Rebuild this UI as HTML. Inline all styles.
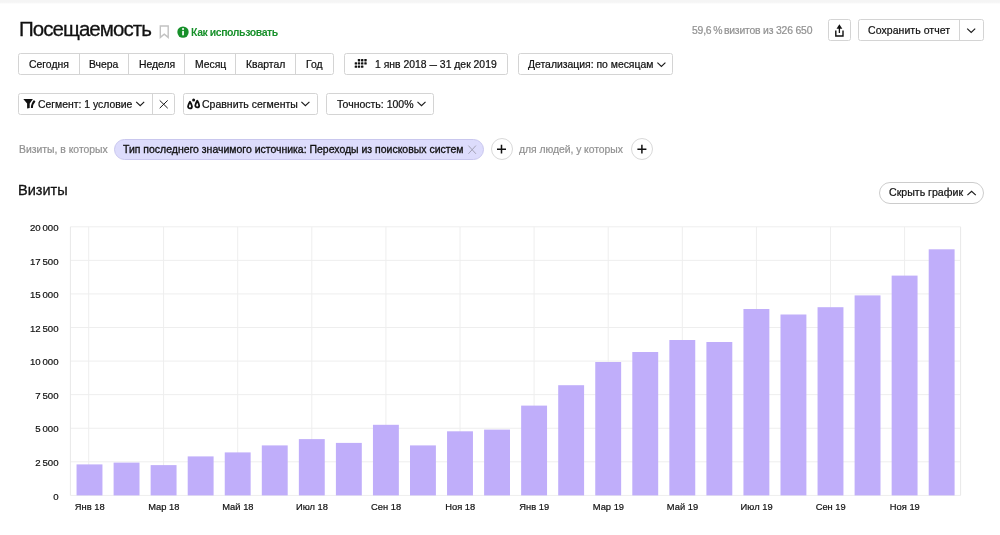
<!DOCTYPE html>
<html lang="ru"><head><meta charset="utf-8"><title>Посещаемость</title>
<style>
*{box-sizing:border-box;margin:0;padding:0}
html,body{width:1000px;height:535px;overflow:hidden;background:#fff}
body{font-family:"Liberation Sans",Arial,sans-serif;color:#111;position:relative;font-size:10.4px}
.abs{position:absolute;white-space:nowrap}
.topbar{left:0;top:0;width:1000px;height:4px;background:linear-gradient(#f5f5f5 0,#f5f5f5 55%,#fff 100%)}
.title{will-change:transform;-webkit-text-stroke:0.3px #111;left:18.6px;top:16.1px;font-size:20.5px;line-height:26px;color:#111;letter-spacing:-0.95px}
.box{border:1px solid #d4d4d4;border-radius:2.5px;background:#fff;height:22px}
.sep{width:1px;height:20px;background:#d4d4d4}
.t{font-size:10.4px;line-height:12px;color:#111;-webkit-text-stroke:0.22px currentColor;will-change:transform}
.gray{color:#929292}
.how{will-change:transform;top:25.8px;font-size:10.5px;font-weight:bold;color:#1a9428;line-height:12px;letter-spacing:-0.4px;word-spacing:-0.3px;color:#17902a}
.pill{left:113.5px;top:139px;height:21px;width:370.5px;border-radius:10.5px;background:#dddcfc;border:1px solid #c9c7ee}
.circ{width:22px;height:22px;border:1px solid #d8d8d8;border-radius:50%;background:#fff}
.h2{will-change:transform;-webkit-text-stroke:0.3px #111;left:18.4px;top:181.2px;font-size:14.5px;line-height:18px;color:#111}
.hide{left:879px;top:182px;width:105px;height:22px;border:1px solid #ccc;border-radius:11px;background:#fff}
svg{overflow:visible}
</style></head><body>
<div class="abs topbar"></div>
<div class="abs title">Посещаемость</div>
<svg class="abs" style="left:0;top:0" width="1000" height="215" viewBox="0 0 1000 215">
 <!-- bookmark -->
 <path d="M160.3 26h7.9v11.4l-3.95-3.3-3.95 3.3z" fill="none" stroke="#c2c2c2" stroke-width="1.4"/>
 <!-- info -->
 <circle cx="183" cy="32.1" r="5.7" fill="#17902a"/><rect x="182.2" y="30.9" width="1.7" height="4.4" fill="#fff"/><circle cx="183.05" cy="29" r="1.05" fill="#fff"/>
</svg>
<div class="abs how" style="left:190.7px">Как использовать</div>

<!-- row 1 -->
<div class="abs box" style="left:18px;top:53px;width:315.5px"></div>
<div class="abs sep" style="left:79px;top:54px"></div>
<div class="abs sep" style="left:128px;top:54px"></div>
<div class="abs sep" style="left:184px;top:54px"></div>
<div class="abs sep" style="left:235px;top:54px"></div>
<div class="abs sep" style="left:295px;top:54px"></div>
<div class="abs t" style="left:28.6px;top:59.4px">Сегодня</div>
<div class="abs t" style="left:89.3px;top:59.4px">Вчера</div>
<div class="abs t" style="left:138.5px;top:59.4px">Неделя</div>
<div class="abs t" style="left:194.6px;top:59.4px">Месяц</div>
<div class="abs t" style="left:246px;top:59.4px">Квартал</div>
<div class="abs t" style="left:305.8px;top:59.4px">Год</div>
<div class="abs box" style="left:344px;top:53px;width:164px"></div>
<div class="abs t" style="left:375.4px;top:59.4px">1 янв 2018 <span style="display:inline-block;transform:scaleX(.72);margin:0 -1.45px">—</span> 31 дек 2019</div>
<div class="abs box" style="left:518px;top:53px;width:155px"></div>
<div class="abs t" style="left:528px;top:59.4px">Детализация: по месяцам</div>

<div class="abs t gray" style="left:691.5px;top:25.2px;letter-spacing:-0.19px"><span style="word-spacing:-1px">59,6 % </span>визитов из 326 650</div>
<div class="abs box" style="left:828px;top:19px;width:23px"></div>
<div class="abs box" style="left:858px;top:19px;width:126px"></div>
<div class="abs sep" style="left:959px;top:20px"></div>
<div class="abs t" style="left:867.6px;top:23.8px;font-size:10.5px;letter-spacing:0.06px">Сохранить отчет</div>

<!-- row 2 -->
<div class="abs box" style="left:18px;top:93px;width:157px"></div>
<div class="abs sep" style="left:152px;top:94px"></div>
<div class="abs t" style="left:38.3px;top:99.4px">Сегмент: 1 условие</div>
<div class="abs box" style="left:183px;top:93px;width:135px"></div>
<div class="abs t" style="left:202.4px;top:98.3px;font-size:10.5px">Сравнить сегменты</div>
<div class="abs box" style="left:326px;top:93px;width:108px"></div>
<div class="abs t" style="left:336.5px;top:98.3px;font-size:10.5px">Точность: 100%</div>

<!-- filter row -->
<div class="abs t gray" style="left:18.5px;top:144px">Визиты, в которых</div>
<div class="abs pill"></div>
<div class="abs t" style="left:122.8px;top:144px;font-size:10.48px;-webkit-text-stroke:0.32px #111">Тип последнего значимого источника: Переходы из поисковых систем</div>
<div class="abs circ" style="left:490.7px;top:138.2px"></div>
<div class="abs t gray" style="left:519.1px;top:144px;letter-spacing:-0.05px">для людей, у которых</div>
<div class="abs circ" style="left:631px;top:138.2px"></div>

<div class="abs h2">Визиты</div>
<div class="abs hide"></div>
<div class="abs t" style="left:889.1px;top:186.3px;font-size:10.6px">Скрыть график</div>

<!-- icons overlay -->
<svg class="abs" style="left:0;top:0" width="1000" height="215" viewBox="0 0 1000 215" fill="none" stroke="#1a1a1a" stroke-width="1.15">
 <!-- calendar dots -->
 <g fill="#111" stroke="none">
  <rect x="357.8" y="59" width="2.4" height="2.4" rx=".6"/><rect x="361" y="59" width="2.4" height="2.4" rx=".6"/><rect x="364.3" y="59" width="2.4" height="2.4" rx=".6"/>
  <rect x="354.7" y="62.2" width="2.4" height="2.4" rx=".6"/><rect x="357.8" y="62.2" width="2.4" height="2.4" rx=".6"/><rect x="361" y="62.2" width="2.4" height="2.4" rx=".6"/><rect x="364.3" y="62.2" width="2.4" height="2.4" rx=".6"/>
  <rect x="354.7" y="65.4" width="2.4" height="2.4" rx=".6"/><rect x="357.8" y="65.4" width="2.4" height="2.4" rx=".6"/><rect x="361" y="65.4" width="2.4" height="2.4" rx=".6"/>
 </g>
 <!-- chevrons down -->
 <path d="M657.4 62.6l4 3.8 4-3.8"/>
 <path d="M967.2 28.6l4 3.8 4-3.8"/>
 <path d="M136.2 101.9l4 3.8 4-3.8"/>
 <path d="M301.4 101.9l4 3.8 4-3.8"/>
 <path d="M417.5 101.9l4 3.8 4-3.8"/>
 <!-- chevron up -->
 <path d="M967.4 195.2l4.2-3.9 4.2 3.9"/>
 <!-- X button -->
 <path d="M159.7 100.4l8 7.8M167.7 100.4l-8 7.8" stroke-width="1"/>
 <!-- pill x -->
 <path d="M468.4 145.6l7.5 8.2M475.9 145.6l-7.5 8.2" stroke="#9d9cae" stroke-width=".9"/>
 <!-- plus -->
 <path d="M497 149.2h9M501.5 144.8v8.8" stroke="#111" stroke-width="1.5"/>
 <path d="M637.4 149.2h9M641.9 144.8v8.8" stroke="#111" stroke-width="1.5"/>
 <!-- share -->
 <path d="M835.8 30.4v5.6h7.2v-5.6" stroke="#111" stroke-width="1.4"/>
 <path d="M839.4 33v-5" stroke="#111" stroke-width="1.3"/>
 <path d="M839.4 24.3l2.9 4.4h-5.8z" fill="#111" stroke="none"/>
 <!-- funnel -->
 <path d="M23.3 99h9.6l-3.2 4.6v4.5l-2.6.5v-5z" fill="#111" stroke="none"/>
 <path d="M34.7 100.7C33.2 102.3 31.9 104 31.9 108" stroke="#111" stroke-width="2"/>
 <!-- drops -->
 <path d="M190 101.7c1.100 2 1.950 3.400 1.950 4.700a1.950 1.950 0 0 1-3.900 0c0-1.300.850-2.700 1.950-4.700z" stroke="#111" stroke-width="1.800" stroke-linejoin="round"/>
 <path d="M197.250 100.700c1.100 2 1.950 3.400 1.950 4.700a1.950 1.950 0 0 1-3.900 0c0-1.300.850-2.700 1.950-4.700z" stroke="#111" stroke-width="1.800" stroke-linejoin="round"/>
 <circle cx="193.600" cy="99.900" r="1.500" fill="#111" stroke="none"/>
</svg>
<svg class="abs" style="left:0;top:215px;will-change:transform" width="1000" height="320" viewBox="0 215 1000 320">
<line x1="70.4" x2="960.6" y1="226.80" y2="226.80" stroke="#eeeeee" stroke-width="1"/>
<line x1="70.4" x2="960.6" y1="260.38" y2="260.38" stroke="#eeeeee" stroke-width="1"/>
<line x1="70.4" x2="960.6" y1="293.95" y2="293.95" stroke="#eeeeee" stroke-width="1"/>
<line x1="70.4" x2="960.6" y1="327.52" y2="327.52" stroke="#eeeeee" stroke-width="1"/>
<line x1="70.4" x2="960.6" y1="361.10" y2="361.10" stroke="#eeeeee" stroke-width="1"/>
<line x1="70.4" x2="960.6" y1="394.67" y2="394.67" stroke="#eeeeee" stroke-width="1"/>
<line x1="70.4" x2="960.6" y1="428.25" y2="428.25" stroke="#eeeeee" stroke-width="1"/>
<line x1="70.4" x2="960.6" y1="461.82" y2="461.82" stroke="#eeeeee" stroke-width="1"/>
<line x1="70.4" x2="960.6" y1="495.40" y2="495.40" stroke="#eeeeee" stroke-width="1"/>
<line x1="88.70" x2="88.70" y1="226.8" y2="495.4" stroke="#eeeeee" stroke-width="1"/>
<line x1="163.60" x2="163.60" y1="226.8" y2="495.4" stroke="#eeeeee" stroke-width="1"/>
<line x1="237.70" x2="237.70" y1="226.8" y2="495.4" stroke="#eeeeee" stroke-width="1"/>
<line x1="311.80" x2="311.80" y1="226.8" y2="495.4" stroke="#eeeeee" stroke-width="1"/>
<line x1="385.90" x2="385.90" y1="226.8" y2="495.4" stroke="#eeeeee" stroke-width="1"/>
<line x1="460.00" x2="460.00" y1="226.8" y2="495.4" stroke="#eeeeee" stroke-width="1"/>
<line x1="534.10" x2="534.10" y1="226.8" y2="495.4" stroke="#eeeeee" stroke-width="1"/>
<line x1="608.20" x2="608.20" y1="226.8" y2="495.4" stroke="#eeeeee" stroke-width="1"/>
<line x1="682.30" x2="682.30" y1="226.8" y2="495.4" stroke="#eeeeee" stroke-width="1"/>
<line x1="756.40" x2="756.40" y1="226.8" y2="495.4" stroke="#eeeeee" stroke-width="1"/>
<line x1="830.50" x2="830.50" y1="226.8" y2="495.4" stroke="#eeeeee" stroke-width="1"/>
<line x1="904.60" x2="904.60" y1="226.8" y2="495.4" stroke="#eeeeee" stroke-width="1"/>
<line x1="70.4" x2="70.4" y1="226.8" y2="495.4" stroke="#e8e8e8" stroke-width="1"/>
<line x1="960.6" x2="960.6" y1="226.8" y2="495.4" stroke="#e8e8e8" stroke-width="1"/>
<rect x="76.55" y="464.40" width="25.9" height="31.00" fill="#c0aefa"/>
<rect x="113.60" y="462.60" width="25.9" height="32.80" fill="#c0aefa"/>
<rect x="150.65" y="465.10" width="25.9" height="30.30" fill="#c0aefa"/>
<rect x="187.70" y="456.40" width="25.9" height="39.00" fill="#c0aefa"/>
<rect x="224.75" y="452.40" width="25.9" height="43.00" fill="#c0aefa"/>
<rect x="261.80" y="445.40" width="25.9" height="50.00" fill="#c0aefa"/>
<rect x="298.85" y="439.10" width="25.9" height="56.30" fill="#c0aefa"/>
<rect x="335.90" y="442.90" width="25.9" height="52.50" fill="#c0aefa"/>
<rect x="372.95" y="424.80" width="25.9" height="70.60" fill="#c0aefa"/>
<rect x="410.00" y="445.40" width="25.9" height="50.00" fill="#c0aefa"/>
<rect x="447.05" y="431.30" width="25.9" height="64.10" fill="#c0aefa"/>
<rect x="484.10" y="429.60" width="25.9" height="65.80" fill="#c0aefa"/>
<rect x="521.15" y="405.60" width="25.9" height="89.80" fill="#c0aefa"/>
<rect x="558.20" y="385.20" width="25.9" height="110.20" fill="#c0aefa"/>
<rect x="595.25" y="362.00" width="25.9" height="133.40" fill="#c0aefa"/>
<rect x="632.30" y="352.00" width="25.9" height="143.40" fill="#c0aefa"/>
<rect x="669.35" y="340.00" width="25.9" height="155.40" fill="#c0aefa"/>
<rect x="706.40" y="342.00" width="25.9" height="153.40" fill="#c0aefa"/>
<rect x="743.45" y="309.00" width="25.9" height="186.40" fill="#c0aefa"/>
<rect x="780.50" y="314.50" width="25.9" height="180.90" fill="#c0aefa"/>
<rect x="817.55" y="307.20" width="25.9" height="188.20" fill="#c0aefa"/>
<rect x="854.60" y="295.40" width="25.9" height="200.00" fill="#c0aefa"/>
<rect x="891.65" y="275.60" width="25.9" height="219.80" fill="#c0aefa"/>
<rect x="928.70" y="249.30" width="25.9" height="246.10" fill="#c0aefa"/>
<g font-family="Liberation Sans, Arial, sans-serif" font-size="9.8" fill="#111" stroke="#111" stroke-width="0.2">
<text transform="translate(58.6,231.00) scale(0.985,1)" text-anchor="end" style="word-spacing:-0.8px">20 000</text>
<text transform="translate(58.6,264.57) scale(0.985,1)" text-anchor="end" style="word-spacing:-0.8px">17 500</text>
<text transform="translate(58.6,298.15) scale(0.985,1)" text-anchor="end" style="word-spacing:-0.8px">15 000</text>
<text transform="translate(58.6,331.72) scale(0.985,1)" text-anchor="end" style="word-spacing:-0.8px">12 500</text>
<text transform="translate(58.6,365.30) scale(0.985,1)" text-anchor="end" style="word-spacing:-0.8px">10 000</text>
<text transform="translate(58.6,398.87) scale(0.985,1)" text-anchor="end" style="word-spacing:-0.8px">7 500</text>
<text transform="translate(58.6,432.45) scale(0.985,1)" text-anchor="end" style="word-spacing:-0.8px">5 000</text>
<text transform="translate(58.6,466.02) scale(0.985,1)" text-anchor="end" style="word-spacing:-0.8px">2 500</text>
<text transform="translate(58.6,499.60) scale(0.985,1)" text-anchor="end" style="word-spacing:-0.8px">0</text>
<text transform="translate(89.70,510.2) scale(0.955,1)" text-anchor="middle">Янв 18</text>
<text transform="translate(163.80,510.2) scale(0.955,1)" text-anchor="middle">Мар 18</text>
<text transform="translate(237.90,510.2) scale(0.955,1)" text-anchor="middle">Май 18</text>
<text transform="translate(312.00,510.2) scale(0.955,1)" text-anchor="middle">Июл 18</text>
<text transform="translate(386.10,510.2) scale(0.955,1)" text-anchor="middle">Сен 18</text>
<text transform="translate(460.20,510.2) scale(0.955,1)" text-anchor="middle">Ноя 18</text>
<text transform="translate(534.30,510.2) scale(0.955,1)" text-anchor="middle">Янв 19</text>
<text transform="translate(608.40,510.2) scale(0.955,1)" text-anchor="middle">Мар 19</text>
<text transform="translate(682.50,510.2) scale(0.955,1)" text-anchor="middle">Май 19</text>
<text transform="translate(756.60,510.2) scale(0.955,1)" text-anchor="middle">Июл 19</text>
<text transform="translate(830.70,510.2) scale(0.955,1)" text-anchor="middle">Сен 19</text>
<text transform="translate(904.80,510.2) scale(0.955,1)" text-anchor="middle">Ноя 19</text>
</g></svg>
</body></html>
